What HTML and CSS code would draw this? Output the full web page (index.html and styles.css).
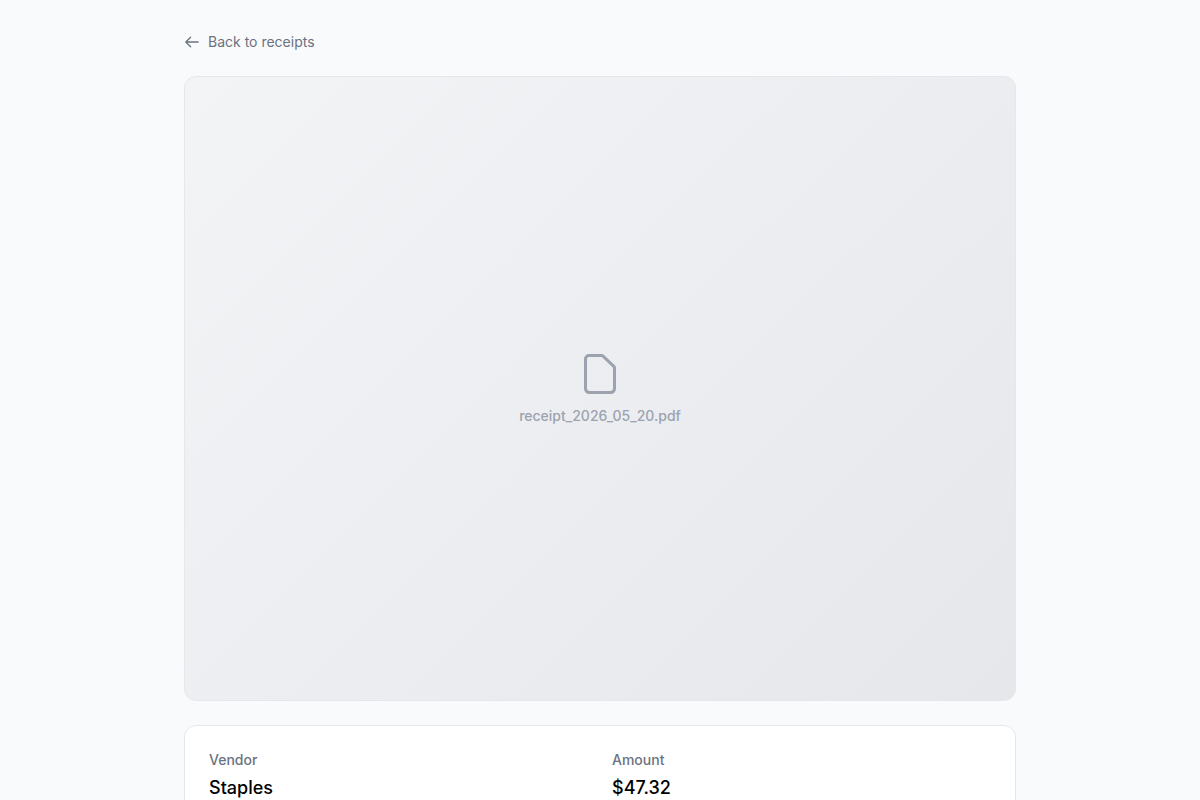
FILE: index.html
```html
<!DOCTYPE html>
<html lang="en">
<head>
    <meta charset="UTF-8">
    <meta name="viewport" content="width=device-width, initial-scale=1.0">
    <title>Receipt - Staples</title>
    <link rel="stylesheet" href="styles.css">
</head>
<body>
    <main class="container">
        <a href="#" class="back-link">
            <svg class="back-icon" viewBox="0 0 16 16" aria-hidden="true">
                <path d="M14.2 8H2M6.6 3.2L1.8 8l4.8 4.8"/>
            </svg>
            Back to receipts
        </a>

        <div class="preview">
            <svg class="file-icon" viewBox="0 0 24 24" aria-hidden="true">
                <path d="M6.5 2.75H12.9c.2 0 .38.08.52.22l5.6 5.3c.15.14.23.34.23.55V19.3c0 1.08-.87 1.95-1.95 1.95H6.7c-1.08 0-1.95-.87-1.95-1.95v-14.8c0-.97.78-1.75 1.75-1.75z"/>
            </svg>
            <p class="file-name">receipt_2026_05_20.pdf</p>
        </div>

        <section class="card">
            <dl class="details">
                <div class="detail">
                    <dt>Vendor</dt>
                    <dd>Staples</dd>
                </div>
                <div class="detail">
                    <dt>Amount</dt>
                    <dd>$47.32</dd>
                </div>
            </dl>
        </section>
    </main>
</body>
</html>
```
FILE: styles.css
```css
* {
    margin: 0;
    padding: 0;
    box-sizing: border-box;
}

body {
    font-family: Inter, "Liberation Sans", sans-serif;
    font-size: 14px;
    line-height: 20px;
    background: #f9fafb;
    color: #000;
}

.container {
    max-width: 896px;
    margin: 0 auto;
    padding: 32px;
}

.back-link {
    display: flex;
    align-items: center;
    gap: 8px;
    width: fit-content;
    margin-bottom: 24px;
    color: #6b7280;
    text-decoration: none;
}

.back-link:hover {
    color: #111827;
}

.back-icon {
    width: 16px;
    height: 16px;
    fill: none;
    stroke: currentColor;
    stroke-width: 1.3;
    stroke-linecap: round;
    stroke-linejoin: round;
}

/* receipt file preview, 4:3 inside the border */
.preview {
    display: flex;
    flex-direction: column;
    align-items: center;
    justify-content: center;
    gap: 8px;
    box-sizing: content-box;
    aspect-ratio: 4 / 3;
    margin-bottom: 24px;
    border: 1px solid #e5e7eb;
    border-radius: 12px;
    background: linear-gradient(135deg, #f3f4f6, #e5e7eb);
    color: #9ca3af;
}

.file-icon {
    width: 48px;
    height: 48px;
    fill: none;
    stroke: currentColor;
    stroke-width: 1.5;
    stroke-linejoin: round;
}

.file-name {
    font-weight: 500;
}

/* receipt details */
.card {
    padding: 24px;
    background: #fff;
    border: 1px solid #e5e7eb;
    border-radius: 12px;
}

.details {
    display: grid;
    grid-template-columns: 1fr 1fr;
    gap: 24px;
}

.detail dt {
    margin-bottom: 4px;
    font-weight: 500;
    color: #6b7280;
}

.detail dd {
    font-size: 18px;
    line-height: 28px;
    font-weight: 500;
}
```
